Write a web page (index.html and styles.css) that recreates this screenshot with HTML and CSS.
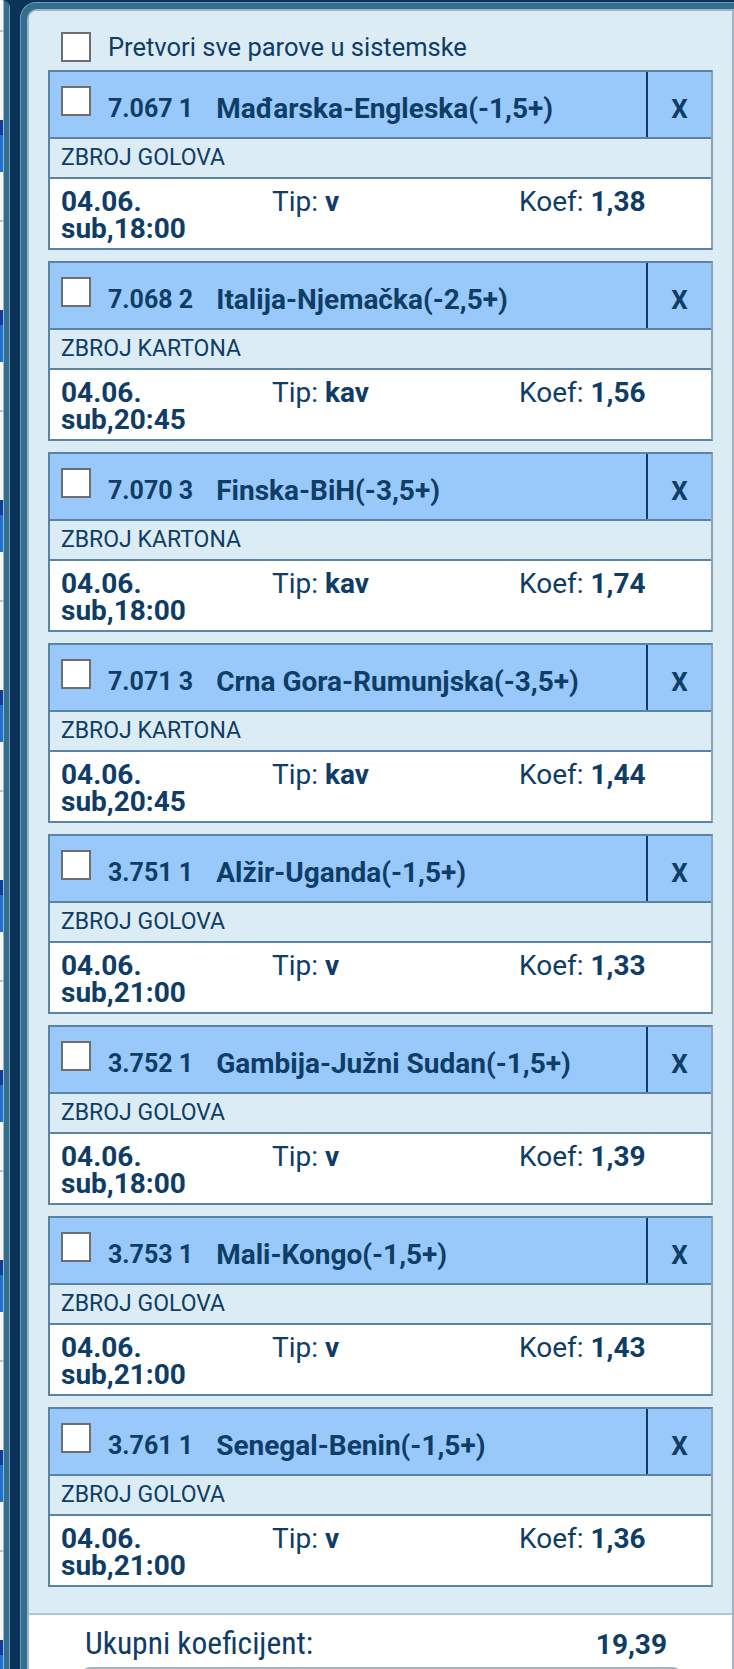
FILE: index.html
```html
<!DOCTYPE html>
<html>

<head>
    <title>Listić</title>
    <link rel="stylesheet" href="styles.css">
</head>

<body>
    <div class="edge"></div>

    <div class="frame">
        <div class="panel">
            <div class="slip">
                <label class="all-system">
                    <span class="cb"></span>
                    Pretvori sve parove u sistemske
                </label>

                <div class="pick">
                    <div class="pick-head">
                        <div class="pick-title"><span class="cb"></span><span class="code">7.067 1</span>Mađarska-Engleska(-1,5+)</div>
                        <div class="pick-x">X</div>
                    </div>
                    <div class="pick-market">ZBROJ GOLOVA</div>
                    <div class="pick-info">
                        <div class="date">04.06.<br>sub,18:00</div>
                        <div>Tip: <b>v</b></div>
                        <div>Koef: <b>1,38</b></div>
                    </div>
                </div>

                <div class="pick">
                    <div class="pick-head">
                        <div class="pick-title"><span class="cb"></span><span class="code">7.068 2</span>Italija-Njemačka(-2,5+)</div>
                        <div class="pick-x">X</div>
                    </div>
                    <div class="pick-market">ZBROJ KARTONA</div>
                    <div class="pick-info">
                        <div class="date">04.06.<br>sub,20:45</div>
                        <div>Tip: <b>kav</b></div>
                        <div>Koef: <b>1,56</b></div>
                    </div>
                </div>

                <div class="pick">
                    <div class="pick-head">
                        <div class="pick-title"><span class="cb"></span><span class="code">7.070 3</span>Finska-BiH(-3,5+)</div>
                        <div class="pick-x">X</div>
                    </div>
                    <div class="pick-market">ZBROJ KARTONA</div>
                    <div class="pick-info">
                        <div class="date">04.06.<br>sub,18:00</div>
                        <div>Tip: <b>kav</b></div>
                        <div>Koef: <b>1,74</b></div>
                    </div>
                </div>

                <div class="pick">
                    <div class="pick-head">
                        <div class="pick-title"><span class="cb"></span><span class="code">7.071 3</span>Crna Gora-Rumunjska(-3,5+)</div>
                        <div class="pick-x">X</div>
                    </div>
                    <div class="pick-market">ZBROJ KARTONA</div>
                    <div class="pick-info">
                        <div class="date">04.06.<br>sub,20:45</div>
                        <div>Tip: <b>kav</b></div>
                        <div>Koef: <b>1,44</b></div>
                    </div>
                </div>

                <div class="pick">
                    <div class="pick-head">
                        <div class="pick-title"><span class="cb"></span><span class="code">3.751 1</span>Alžir-Uganda(-1,5+)</div>
                        <div class="pick-x">X</div>
                    </div>
                    <div class="pick-market">ZBROJ GOLOVA</div>
                    <div class="pick-info">
                        <div class="date">04.06.<br>sub,21:00</div>
                        <div>Tip: <b>v</b></div>
                        <div>Koef: <b>1,33</b></div>
                    </div>
                </div>

                <div class="pick">
                    <div class="pick-head">
                        <div class="pick-title"><span class="cb"></span><span class="code">3.752 1</span>Gambija-Južni Sudan(-1,5+)</div>
                        <div class="pick-x">X</div>
                    </div>
                    <div class="pick-market">ZBROJ GOLOVA</div>
                    <div class="pick-info">
                        <div class="date">04.06.<br>sub,18:00</div>
                        <div>Tip: <b>v</b></div>
                        <div>Koef: <b>1,39</b></div>
                    </div>
                </div>

                <div class="pick">
                    <div class="pick-head">
                        <div class="pick-title"><span class="cb"></span><span class="code">3.753 1</span>Mali-Kongo(-1,5+)</div>
                        <div class="pick-x">X</div>
                    </div>
                    <div class="pick-market">ZBROJ GOLOVA</div>
                    <div class="pick-info">
                        <div class="date">04.06.<br>sub,21:00</div>
                        <div>Tip: <b>v</b></div>
                        <div>Koef: <b>1,43</b></div>
                    </div>
                </div>

                <div class="pick">
                    <div class="pick-head">
                        <div class="pick-title"><span class="cb"></span><span class="code">3.761 1</span>Senegal-Benin(-1,5+)</div>
                        <div class="pick-x">X</div>
                    </div>
                    <div class="pick-market">ZBROJ GOLOVA</div>
                    <div class="pick-info">
                        <div class="date">04.06.<br>sub,21:00</div>
                        <div>Tip: <b>v</b></div>
                        <div>Koef: <b>1,36</b></div>
                    </div>
                </div>
            </div>

            <div class="total">
                <div class="total-row">
                    <span class="total-label">Ukupni koeficijent:</span>
                    <b>19,39</b>
                </div>
                <div class="stake"></div>
            </div>
        </div>
    </div>
</body>

</html>
```

FILE: styles.css
```css
body {
    margin: 0;
    background-color: #0b335a;
    font-family: Roboto, "Noto Sans", sans-serif;
    color: #0f3d66;
    display: flex;
    align-items: flex-start;
    height: 1669px;
    overflow: hidden;
}

/* strip of the page behind, peeking out on the left */
.edge {
    width: 10px;
    height: 1669px;
    margin-right: 10px;
    border-top-right-radius: 8px;
    background:
        repeating-linear-gradient(to bottom, #f4f6f7 0 30px, #b9c3ca 30px 32px, #f4f6f7 32px 120px, #0c3f9c 120px 135px, #1b72d4 135px 172px, #f4f6f7 172px 190px) 0 0 / 3px 100% no-repeat,
        linear-gradient(to right, #f4f6f7 0 3px, #9db4c4 3px 4px, #336e8e 4px 9px, #7ea3ba 9px 10px);
}

.frame {
    flex: 1;
    margin-top: 2px;
    padding: 6px 0 0 6px;
    background-color: #336e8e;
    border-top: 1px solid #6f9ab5;
    border-left: 1px solid #6f9ab5;
    border-top-left-radius: 16px;
}

.panel {
    border: 2px solid #9fb3c2;
    border-bottom: none;
    border-top-left-radius: 10px;
    overflow: hidden;
    background-color: #ffffff;
}

.slip {
    background-color: #dbecf4;
    padding: 19px 19px 15px 19px;
    border-bottom: 2px solid #b3c6d3;
}

.cb {
    display: inline-block;
    box-sizing: border-box;
    width: 30px;
    height: 30px;
    flex: none;
    background-color: #ffffff;
    border: 2px solid #6e6e6e;
}

.all-system {
    display: flex;
    align-items: center;
    gap: 17px;
    height: 34px;
    padding-left: 13px;
    margin-bottom: 6px;
    font-size: 25.5px;
}

.pick {
    border: 2px solid #5b83a4;
    border-right-color: #8ea4b6;
    margin-bottom: 11px;
}

.pick-head {
    display: flex;
    height: 65px;
    background-color: #99c9fb;
    border-bottom: 2px solid #5b83a4;
}

.pick-title {
    flex: 1;
    display: flex;
    align-items: center;
    gap: 17px;
    box-sizing: border-box;
    padding: 8px 0 0 11px;
    font-size: 28px;
    font-weight: bold;
    white-space: nowrap;
}

.pick-title .cb {
    margin-top: -16px;
}

.pick-title .code {
    font-size: 25px;
    margin-right: 6px;
}

.pick-x {
    width: 65px;
    box-sizing: border-box;
    padding-top: 8px;
    border-left: 2px solid #0f3d66;
    display: flex;
    align-items: center;
    justify-content: center;
    font-size: 26px;
    font-weight: bold;
}

.pick-market {
    height: 38px;
    line-height: 38px;
    padding-left: 11px;
    font-size: 23px;
    border-bottom: 2px solid #5b83a4;
}

.pick-info {
    display: grid;
    grid-template-columns: 211px 247px 1fr;
    height: 69px;
    box-sizing: border-box;
    padding: 9px 11px 0 11px;
    background-color: #ffffff;
    font-size: 28px;
    line-height: 27px;
}

.date {
    font-weight: bold;
}

.total {
    padding: 10px 51px 0 53px;
}

.total-row {
    display: flex;
    justify-content: space-between;
    align-items: baseline;
    padding: 0 14px 0 3px;
    font-size: 28px;
    height: 42px;
}

.total-label {
    font-family: "Roboto Condensed", "Liberation Sans Narrow", "DejaVu Sans Condensed", Roboto, sans-serif;
    font-stretch: condensed;
    font-size: 31.5px;
}

.stake {
    height: 40px;
    border: 2px solid #a3b4c0;
    border-radius: 8px;
}
```
